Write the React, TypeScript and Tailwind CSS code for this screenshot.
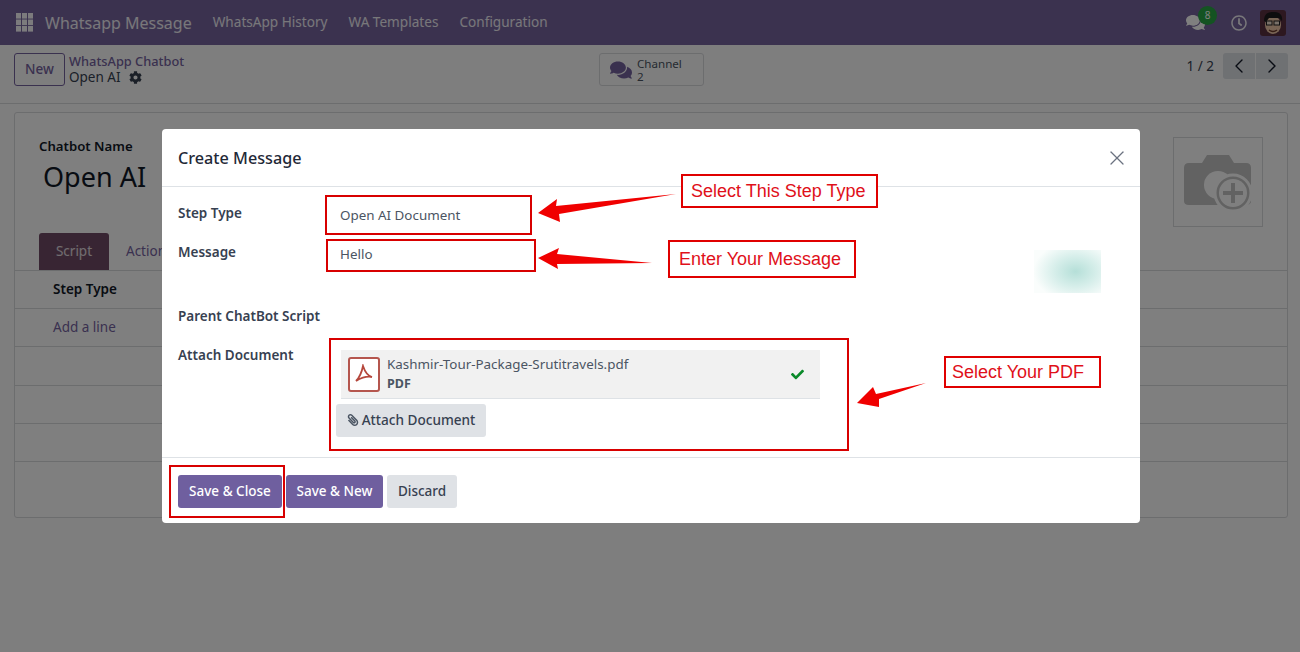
import { ChevronLeft, ChevronRight, X } from 'lucide-react';
import { FaCheck, FaCog, FaComments, FaPaperclip, FaRegClock } from 'react-icons/fa';

const FONT = 'font-["Noto_Sans","Open_Sans",sans-serif]';

function AppsIcon() {
	return (
		<svg width="17" height="19" viewBox="0 0 17 19" className="ml-[16px] shrink-0" fill="#ffffff" fillOpacity="0.95">
			{[0, 6, 12].map((x) => [0, 6.5, 13].map((y) => <rect key={`${x}-${y}`} x={x} y={y} width="5" height="5.6" />))}
		</svg>
	);
}

function Navbar() {
	return (
		<div className="flex h-[45px] items-center bg-[#76649f] text-white">
			<AppsIcon />
			<span className="ml-[12px] text-[16px] text-white/90">Whatsapp Message</span>
			<div className="ml-[21px] flex gap-[21px] text-[13.6px] text-white/90">
				<span>WhatsApp History</span>
				<span>WA Templates</span>
				<span>Configuration</span>
			</div>
			<div className="ml-auto flex items-center">
				<div className="relative mr-[26px]">
					<FaComments size={19} className="text-white" />
					<span className="absolute -top-[7px] left-[12px] flex h-[19px] w-[19px] items-center justify-center rounded-full bg-[#28a745] text-[10px] text-white">8</span>
				</div>
				<FaRegClock size={16} className="mr-[13px] text-white/90" />
				<Avatar />
				<div className="w-[14px]" />
			</div>
		</div>
	);
}

function Avatar() {
	return (
		<svg width="26" height="26" viewBox="0 0 26 26" className="rounded-[3px]">
			<rect width="26" height="26" fill="#5a3040" />
			<ellipse cx="13" cy="15" rx="8" ry="9" fill="#f0c8a8" />
			<path d="M4 11 C4 3 9 2 13 2 C19 2 23 4 22 11 L19 8 L9 8 L6 12 Z" fill="#1d1a1c" />
			<rect x="6.5" y="11" width="5.5" height="4" fill="#f3e3d3" stroke="#222" strokeWidth="1" />
			<rect x="14" y="11" width="5.5" height="4" fill="#f3e3d3" stroke="#222" strokeWidth="1" />
			<path d="M9 20 Q13 23 17 20" stroke="#6b3a2a" strokeWidth="1.4" fill="none" />
		</svg>
	);
}

function ControlPanel() {
	return (
		<div className="flex h-[59px] items-start border-b border-[#d8dadd] bg-[#fdfdfd] pr-[12px] pl-[14px]">
			<button className="mt-[8px] h-[33px] w-[51px] rounded-[3px] border border-[#75629f] pb-[1px] text-[13.5px] font-medium text-[#75629f]">New</button>
			<div className="mt-[8px] ml-[4px] w-[530px] leading-[16px]">
				<div className="text-[12.8px] font-medium text-[#75629f]">WhatsApp Chatbot</div>
				<div className="flex items-center gap-[8px] text-[13.5px] text-[#374151]">
					Open AI <FaCog size={13} className="text-[#374151]" />
				</div>
			</div>
			<div className="mt-[8px] flex h-[33px] w-[105px] items-center gap-[5px] rounded-[3px] border border-[#d8dadd] pl-[10px]">
				<FaComments size={22} className="text-[#75629f]" />
				<div className="text-[11.6px] leading-[13px] text-[#4b5563]">
					<div>Channel</div>
					<div>2</div>
				</div>
			</div>
			<div className="mt-[8px] ml-auto flex items-center">
				<span className="mr-[9px] text-[13.5px] text-[#374151]">1 / 2</span>
				<div className="flex h-[26px] gap-px">
					<span className="flex w-[32px] items-center justify-center rounded-l-[3px] bg-[#dfe2e6] text-[#111827]"><ChevronLeft size={24} strokeWidth={1.4} /></span>
					<span className="flex w-[32px] items-center justify-center rounded-r-[3px] bg-[#dfe2e6] text-[#111827]"><ChevronRight size={24} strokeWidth={1.4} /></span>
				</div>
			</div>
		</div>
	);
}

function BackgroundSheet() {
	return (
		<div className="mx-[14px] mt-[8px] h-[406px] w-[1274px] rounded-[3px] border border-[#d8dadd] bg-white">
			<div className="flex h-[157px] justify-between pt-[24px] pr-[24px] pl-[24px]">
				<div>
					<div className="text-[13.2px] leading-[19px] font-semibold text-[#111827]">Chatbot Name</div>
					<div className="mt-[3px] ml-[4px] text-[27px] leading-[36px] text-[#111827]">Open AI</div>
				</div>
				<div className="flex h-[90px] w-[90px] items-center justify-center border border-[#d8dadd]">
					<svg width="70" height="62" viewBox="0 0 70 62">
						<path d="M4 12 H19 L24 4 H46 L51 12 H63 Q68 12 68 17 V50 Q68 54 63 54 H6 Q1 54 1 50 V17 Q1 12 6 12 Z" fill="#c4c4c4" />
						<circle cx="35" cy="34" r="14" fill="#fff" />
						<circle cx="50" cy="42" r="18" fill="#c4c4c4" stroke="#fff" strokeWidth="3" />
						<circle cx="50" cy="42" r="14" fill="#fff" />
						<path d="M50 32 V52 M40 42 H60" stroke="#c4c4c4" strokeWidth="4" />
					</svg>
				</div>
			</div>
			<div className="-mt-[37px] flex h-[38px] items-end border-b border-[#d8dadd] pl-[24px]">
				<span className="flex h-[37px] w-[70px] items-center justify-center rounded-t-[3px] bg-[#714b67] text-[13.5px] text-white/80">Script</span>
				<span className="flex h-[37px] items-center pl-[17px] text-[13.5px] text-[#75629f]">Action</span>
			</div>
			<div className="flex h-[38px] items-center border-b border-[#d8dadd] pl-[38px] text-[13.5px] font-semibold text-[#111827]">Step Type</div>
			<div className="flex h-[38px] items-center border-b border-[#d8dadd] pl-[38px] text-[13.5px] text-[#75629f]">Add a line</div>
			<div className="h-[39px] border-b border-[#d8dadd]" />
			<div className="h-[38px] border-b border-[#d8dadd]" />
			<div className="h-[38px] border-b border-[#d8dadd]" />
		</div>
	);
}

function Label({ children, className }: { children: string; className: string }) {
	return <div className={`absolute left-[16px] text-[13.5px] font-semibold text-[#374151] ${className}`}>{children}</div>;
}

function Dialog() {
	return (
		<div className="absolute top-[129px] left-[162px] h-[394px] w-[978px] rounded-[4px] bg-white">
			<div className="flex h-[58px] items-center justify-between border-b border-[#dee2e6] pt-[1px] pr-[11px] pl-[16px]">
				<span className="text-[16.2px] font-medium text-[#1f2937]">Create Message</span>
				<X size={24} strokeWidth={1.3} className="text-[#6b7280]" />
			</div>
			<div className="relative h-[271px] border-b border-[#dee2e6]">
				<Label className="top-[16px]">Step Type</Label>
				<Label className="top-[55px]">Message</Label>
				<Label className="top-[119px]">Parent ChatBot Script</Label>
				<Label className="top-[158px]">Attach Document</Label>
				<div className="absolute top-[18px] left-[178px] text-[13.4px] text-[#4b5563]">Open AI Document</div>
				<div className="absolute top-[57px] left-[178px] text-[13.4px] text-[#4b5563]">Hello</div>
				<div className="absolute top-[63px] left-[872px] h-[43px] w-[67px] bg-[radial-gradient(ellipse_42px_30px_at_62%_50%,#b5dfd8_0%,#d6eeea_50%,#fafdfc_100%)]" />
				<div className="absolute top-[163px] left-[179px] flex h-[49px] w-[479px] items-center border-b border-[#dee2e6] bg-[#f1f1f1] pr-[16px] pl-[7px]">
					<div className="flex h-[35px] w-[32px] items-center justify-center rounded-[3px] border-2 border-[#b5564e] bg-white">
						<svg width="20" height="20" viewBox="0 0 20 20" fill="none" stroke="#b5473c" strokeWidth="1.8">
							<path d="M9 2 C8 7 7 12 2 17 C7 14 13 12 18 13 C14 12 11 8 9 2 Z" />
						</svg>
					</div>
					<div className="ml-[7px] leading-[18px]">
						<div className="text-[13.4px] text-[#4b5563]">Kashmir-Tour-Package-Srutitravels.pdf</div>
						<div className="mt-[2px] text-[12.5px] font-bold text-[#4b5563]">PDF</div>
					</div>
					<FaCheck size={13} className="ml-auto text-[#0a8a2a]" />
				</div>
				<button className="absolute top-[217px] left-[174px] flex h-[33px] w-[150px] items-center justify-center gap-[3px] rounded-[3px] bg-[#dfe2e6] pb-[1px] text-[13.6px] font-medium text-[#374151]">
					<FaPaperclip size={12} className="-scale-x-100 text-[#4b5563]" />Attach Document
				</button>
			</div>
			<div className="flex items-start gap-[4px] pt-[17px] pl-[16px]">
				<button className="h-[33px] w-[104px] rounded-[3px] bg-[#6f5f9f] pb-[1px] text-[13.5px] font-medium text-white">Save &amp; Close</button>
				<button className="h-[33px] w-[97px] rounded-[3px] bg-[#6f5f9f] pb-[1px] text-[13.5px] font-medium text-white">Save &amp; New</button>
				<button className="h-[33px] w-[70px] rounded-[3px] bg-[#dfe2e6] pb-[1px] text-[13.5px] font-medium text-[#374151]">Discard</button>
			</div>
		</div>
	);
}

// red marks drawn on top of the screenshot
function Callout({ className, text }: { className: string; text: string }) {
	return <div className={`absolute flex items-center border-2 border-[#e00000] bg-white font-["Liberation_Sans",sans-serif] text-[18px] text-[#e0101a] ${className}`}>{text}</div>;
}

function Annotations() {
	return (
		<>
			<div className="absolute top-[195px] left-[325px] h-[40px] w-[207px] border-2 border-[#d80000]" />
			<div className="absolute top-[239px] left-[326px] h-[33px] w-[210px] border-2 border-[#d80000]" />
			<div className="absolute top-[338px] left-[329px] h-[113px] w-[520px] border-2 border-[#d80000]" />
			<div className="absolute top-[465px] left-[169px] h-[53px] w-[116px] border-2 border-[#d80000]" />
			<Callout className="top-[174px] left-[681px] h-[34px] w-[197px] pl-[8px]" text="Select This Step Type" />
			<Callout className="top-[240px] left-[668px] h-[38px] w-[188px] pl-[9px]" text="Enter Your Message" />
			<Callout className="top-[356px] left-[944px] h-[32px] w-[157px] pl-[6px]" text="Select Your PDF" />
			<svg width="1300" height="652" className="pointer-events-none absolute top-0 left-0">
				<polygon points="538,213 557,199 556,206 676,194 559,214 560,222" fill="#f00000" />
				<polygon points="538,258 559,248 557,254 652,263 557,264 558,269" fill="#f00000" />
				<polygon points="857,403 873,387 876,394 926,383 879,399 879,407" fill="#f00000" />
			</svg>
		</>
	);
}

export default function App() {
	return (
		<div className={`relative h-[652px] w-[1300px] overflow-hidden bg-[#fcfcfc] ${FONT}`}>
			<Navbar />
			<ControlPanel />
			<BackgroundSheet />
			<div className="absolute inset-0 bg-black/50" />
			<Dialog />
			<Annotations />
		</div>
	);
}
